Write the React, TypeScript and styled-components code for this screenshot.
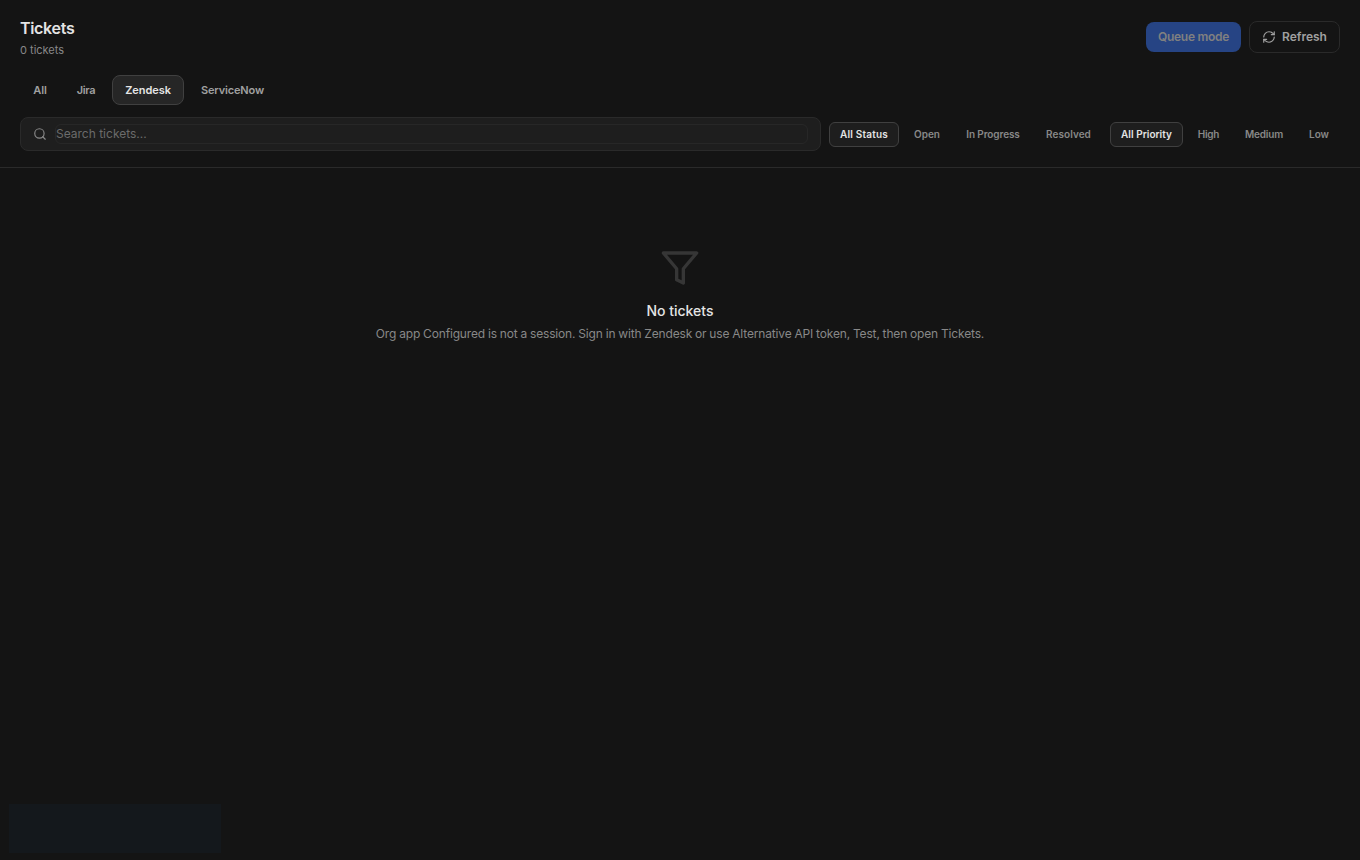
import React from "react";
import styled, { createGlobalStyle } from "styled-components";

const GlobalStyle = createGlobalStyle`
  *, *::before, *::after { box-sizing: border-box; }
  html, body { margin: 0; background: #141414; }
  body, button, input { font-family: Inter, "Liberation Sans", sans-serif; }
`;

const Page = styled.div`
  position: relative;
  display: flex;
  flex-direction: column;
  height: 100vh;
  overflow: hidden;
  background: #141414;
  color: #e4e4e4;
`;

const Header = styled.header`
  display: flex;
  flex-direction: column;
  gap: 12px;
  height: 168px;
  padding: 16px 20px;
  border-bottom: 1px solid #2a2a2a;
`;

const TitleRow = styled.div`
  display: flex;
  align-items: center;
  justify-content: space-between;
  height: 47px;
  padding-bottom: 5px;
  flex: none;
`;

const Title = styled.h1`
  margin: 0;
  font-size: 16px;
  line-height: 24px;
  font-weight: 600;
  letter-spacing: -0.02em;
`;

const Subtitle = styled.p`
  margin: 2px 0 0;
  font-size: 11px;
  line-height: 16px;
  color: #888;
`;

const Actions = styled.div`
  display: flex;
  align-items: center;
  gap: 8px;
`;

const ActionButton = styled.button<{ $primary?: boolean }>`
  display: inline-flex;
  align-items: center;
  justify-content: center;
  gap: 6px;
  width: ${(p) => (p.$primary ? 95 : 91)}px;
  height: ${(p) => (p.$primary ? 30 : 32)}px;
  padding: 0 0 1px;
  border: ${(p) => (p.$primary ? "0" : "1px solid #2a2a2a")};
  border-radius: 8px;
  background: ${(p) => (p.$primary ? "#264484" : "#141414")};
  color: ${(p) => (p.$primary ? "#808080" : "#a0a0a0")};
  font-size: 12px;
  font-weight: 600;
  letter-spacing: ${(p) => (p.$primary ? "-0.022em" : "0")};
  white-space: nowrap;
`;

const Tabs = styled.nav`
  display: flex;
  gap: 4px;
  flex: none;
`;

const Tab = styled.button<{ $active?: boolean; $width: number; $tracking?: number }>`
  width: ${(p) => p.$width}px;
  height: 30px;
  padding: 0;
  border: 1px solid ${(p) => (p.$active ? "#404040" : "transparent")};
  border-radius: 8px;
  background: ${(p) => (p.$active ? "#262626" : "transparent")};
  color: ${(p) => (p.$active ? "#e4e4e4" : "#a0a0a0")};
  font-size: 11px;
  font-weight: 600;
  letter-spacing: ${(p) => p.$tracking ?? -0.1}px;
`;

const FilterRow = styled.div`
  display: flex;
  align-items: center;
  gap: 8px;
  flex: none;
`;

const SearchBox = styled.label`
  display: flex;
  align-items: center;
  gap: 8px;
  flex: 1;
  height: 34px;
  padding: 0 12px;
  border: 1px solid #2a2a2a;
  border-radius: 8px;
  background: #1e1e1e;
  color: #888;
`;

const SearchInput = styled.input`
  flex: 1;
  min-width: 0;
  height: 20px;
  padding: 0 0 1px;
  border: 1px solid #272727;
  border-radius: 6px;
  background: transparent;
  color: #e4e4e4;
  font-size: 12px;
  outline: none;
  &::placeholder { color: #6b6b6b; opacity: 1; }
`;

const FilterGroup = styled.div`
  display: flex;
  gap: 4px;
`;

const Chip = styled.button<{ $active?: boolean; $width: number; $tracking?: number }>`
  width: ${(p) => p.$width}px;
  height: 25px;
  padding: 0;
  border: 1px solid ${(p) => (p.$active ? "#404040" : "transparent")};
  border-radius: 6px;
  background: ${(p) => (p.$active ? "#1e1e1e" : "transparent")};
  color: ${(p) => (p.$active ? "#e4e4e4" : "#888")};
  font-size: 10px;
  font-weight: 600;
  letter-spacing: ${(p) => p.$tracking ?? 0}px;
  white-space: nowrap;
`;

const Empty = styled.main`
  display: flex;
  flex-direction: column;
  align-items: center;
  padding-top: 80px;
`;

const EmptyIcon = styled.svg`
  display: block;
  color: #363636;
`;

const EmptyTitle = styled.h2`
  margin: 12px 0 0;
  font-size: 14px;
  line-height: 21px;
  font-weight: 500;
`;

const EmptyText = styled.p`
  margin: 4px 0 0;
  font-size: 12px;
  line-height: 18px;
  letter-spacing: -0.155px;
  word-spacing: -0.3px;
  color: #888;
`;

const StatusOverlay = styled.div`
  position: absolute;
  left: 9px;
  top: 804px;
  width: 212px;
  height: 49px;
  background: #14181c;
`;

const strokeProps = {
  viewBox: "0 0 24 24",
  fill: "none",
  stroke: "currentColor",
  strokeWidth: 2,
  strokeLinecap: "round",
  strokeLinejoin: "round",
} as const;

interface Option {
  label: string;
  width: number;
  tracking?: number;
}

const sources: Option[] = [
  { label: "All", width: 40 },
  { label: "Jira", width: 44, tracking: -0.35 },
  { label: "Zendesk", width: 72, tracking: -0.05 },
  { label: "ServiceNow", width: 89, tracking: -0.15 },
];

const statuses: Option[] = [
  { label: "All Status", width: 70, tracking: 0.18 },
  { label: "Open", width: 48 },
  { label: "In Progress", width: 76, tracking: -0.1 },
  { label: "Resolved", width: 67, tracking: 0.05 },
];

const priorities: Option[] = [
  { label: "All Priority", width: 73, tracking: 0.03 },
  { label: "High", width: 43, tracking: -0.3 },
  { label: "Medium", width: 60, tracking: -0.15 },
  { label: "Low", width: 42 },
];

function Filters({ options }: { options: Option[] }) {
  return (
    <FilterGroup>
      {options.map((o, i) => (
        <Chip key={o.label} $active={i === 0} $width={o.width} $tracking={o.tracking}>
          {o.label}
        </Chip>
      ))}
    </FilterGroup>
  );
}

export default function App() {
  return (
    <Page>
      <GlobalStyle />
      <Header>
        <TitleRow>
          <div>
            <Title>Tickets</Title>
            <Subtitle>0 tickets</Subtitle>
          </div>
          <Actions>
            <ActionButton $primary>Queue mode</ActionButton>
            <ActionButton>
              <svg width="14" height="14" {...strokeProps}>
                <path d="M3 12a9 9 0 0 1 9-9 9.75 9.75 0 0 1 6.74 2.74L21 8" />
                <path d="M21 3v5h-5" />
                <path d="M21 12a9 9 0 0 1-9 9 9.75 9.75 0 0 1-6.74-2.74L3 16" />
                <path d="M8 16H3v5" />
              </svg>
              Refresh
            </ActionButton>
          </Actions>
        </TitleRow>
        <Tabs>
          {sources.map((s) => (
            <Tab key={s.label} $width={s.width} $tracking={s.tracking} $active={s.label === "Zendesk"}>
              {s.label}
            </Tab>
          ))}
        </Tabs>
        <FilterRow>
          <SearchBox>
            <svg width="14" height="14" {...strokeProps}>
              <circle cx="11" cy="11" r="8" />
              <path d="m21 21-4.3-4.3" />
            </svg>
            <SearchInput placeholder="Search tickets..." />
          </SearchBox>
          <Filters options={statuses} />
          <Filters options={priorities} />
        </FilterRow>
      </Header>
      <Empty>
        <EmptyIcon width="40" height="40" {...strokeProps}>
          <polygon points="22 3 2 3 10 12.46 10 19 14 21 14 12.46 22 3" />
        </EmptyIcon>
        <EmptyTitle>No tickets</EmptyTitle>
        <EmptyText>
          Org app Configured is not a session. Sign in with Zendesk or use Alternative API token, Test, then open Tickets.
        </EmptyText>
      </Empty>
      <StatusOverlay />
    </Page>
  );
}
